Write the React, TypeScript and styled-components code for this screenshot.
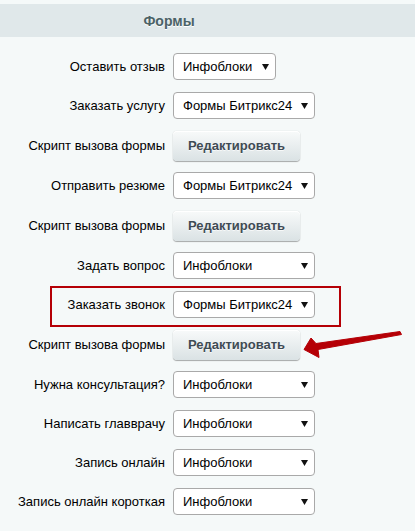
import React from 'react';
import styled, { createGlobalStyle } from 'styled-components';

const GlobalStyle = createGlobalStyle`
	html, body {
		margin: 0;
		padding: 0;
		background: #f5f9f9;
	}
	body {
		font-family: "Liberation Sans", Arial, sans-serif;
		font-size: 13px;
		color: #000;
	}
`;

const Page = styled.div`
	position: relative;
	padding-top: 4px;
	width: 415px;
	height: 531px;
	overflow: hidden;
`;

const Heading = styled.div`
	display: flex;
	align-items: center;
	height: 33px;
	background: #e0e8ea;
`;

const HeadingTitle = styled.span`
	width: 338px;
	text-align: center;
	color: #4b6267;
	font-size: 14px;
	font-weight: bold;
	text-shadow: 0 1px #fff;
`;

const Form = styled.div`
	display: flex;
	flex-direction: column;
	margin-top: 10px;
`;

const Row = styled.div<{ $tall?: boolean }>`
	position: relative;
	display: grid;
	grid-template-columns: 165px auto;
	column-gap: 8px;
	align-items: center;
	height: ${({ $tall }) => ($tall ? 41 : 39)}px;
`;

const Label = styled.label`
	text-align: right;
	white-space: nowrap;
`;

const Field = styled.div<{ $wide?: boolean }>`
	position: relative;
	width: ${({ $wide }) => ($wide ? 142 : 103)}px;
	height: 27px;
`;

const Select = styled.select`
	appearance: none;
	width: 100%;
	height: 100%;
	box-sizing: border-box;
	padding: 0 20px 0 9px;
	border: 1px solid #a9a9a9;
	border-radius: 4px;
	background: #fff;
	font-family: "Liberation Sans", Arial, sans-serif;
	font-size: 13px;
	color: #000;
	outline: none;
`;

const Caret = styled.svg`
	position: absolute;
	right: 7px;
	top: 11px;
	width: 7px;
	height: 6px;
	pointer-events: none;
`;

const Button = styled.button`
	width: 127px;
	height: 30px;
	box-sizing: border-box;
	border: none;
	border-radius: 4px;
	background: linear-gradient(to bottom, #f8fafa, #dae2e4);
	box-shadow: 0 0 1px rgba(0, 0, 0, 0.25), 0 1px 1px rgba(0, 0, 0, 0.3),
		inset 0 1px #fff;
	color: #3f4b54;
	font-family: "Liberation Sans", Arial, sans-serif;
	font-size: 13px;
	font-weight: bold;
	text-shadow: 0 1px rgba(255, 255, 255, 0.7);
	cursor: pointer;
`;

const Highlight = styled.div`
	position: absolute;
	left: 50px;
	top: 1px;
	width: 291px;
	height: 41px;
	box-sizing: border-box;
	border: 2px solid #b50006;
	pointer-events: none;
`;

const Pointer = styled.svg`
	position: absolute;
	left: 295px;
	top: 325px;
	width: 110px;
	height: 40px;
	pointer-events: none;
`;

type Item =
	| { kind: 'select'; label: string; value: string; wide?: boolean; marked?: boolean }
	| { kind: 'button'; label: string };

const options = ['Инфоблоки', 'Формы Битрикс24'];

const items: Item[] = [
	{ kind: 'select', label: 'Оставить отзыв', value: 'Инфоблоки' },
	{ kind: 'select', label: 'Заказать услугу', value: 'Формы Битрикс24', wide: true },
	{ kind: 'button', label: 'Скрипт вызова формы' },
	{ kind: 'select', label: 'Отправить резюме', value: 'Формы Битрикс24', wide: true },
	{ kind: 'button', label: 'Скрипт вызова формы' },
	{ kind: 'select', label: 'Задать вопрос', value: 'Инфоблоки', wide: true },
	{ kind: 'select', label: 'Заказать звонок', value: 'Формы Битрикс24', wide: true, marked: true },
	{ kind: 'button', label: 'Скрипт вызова формы' },
	{ kind: 'select', label: 'Нужна консультация?', value: 'Инфоблоки', wide: true },
	{ kind: 'select', label: 'Написать главврачу', value: 'Инфоблоки', wide: true },
	{ kind: 'select', label: 'Запись онлайн', value: 'Инфоблоки', wide: true },
	{ kind: 'select', label: 'Запись онлайн короткая', value: 'Инфоблоки', wide: true },
];

const Dropdown = ({ value, wide }: { value: string; wide?: boolean }) => (
	<Field $wide={wide}>
		<Select defaultValue={value}>
			{options.map((o) => (
				<option key={o} value={o}>
					{o}
				</option>
			))}
		</Select>
		<Caret viewBox="0 0 7 6">
			<path d="M0 0h7L3.5 6z" fill="#111" />
		</Caret>
	</Field>
);

const App = (): JSX.Element => {
	return (
		<Page>
			<GlobalStyle />
			<Heading>
				<HeadingTitle>Формы</HeadingTitle>
			</Heading>
			<Form>
				{items.map((item, i) =>
					item.kind === 'select' ? (
						<Row key={i}>
							{item.marked && <Highlight />}
							<Label>{item.label}</Label>
							<Dropdown value={item.value} wide={item.wide} />
						</Row>
					) : (
						<Row key={i} $tall>
							<Label>{item.label}</Label>
							<div>
								<Button type="button">Редактировать</Button>
							</div>
						</Row>
					)
				)}
			</Form>
			<Pointer viewBox="295 325 110 40">
				<path
					d="M304 349.5 L311 338 L316 343.5 L400 331.5 L401.5 334.5 L318 349.5 L319 357.5 Z"
					fill="#b50006"
					stroke="#b50006"
					strokeWidth="1"
					strokeLinejoin="round"
				/>
			</Pointer>
		</Page>
	);
};

export default App;
